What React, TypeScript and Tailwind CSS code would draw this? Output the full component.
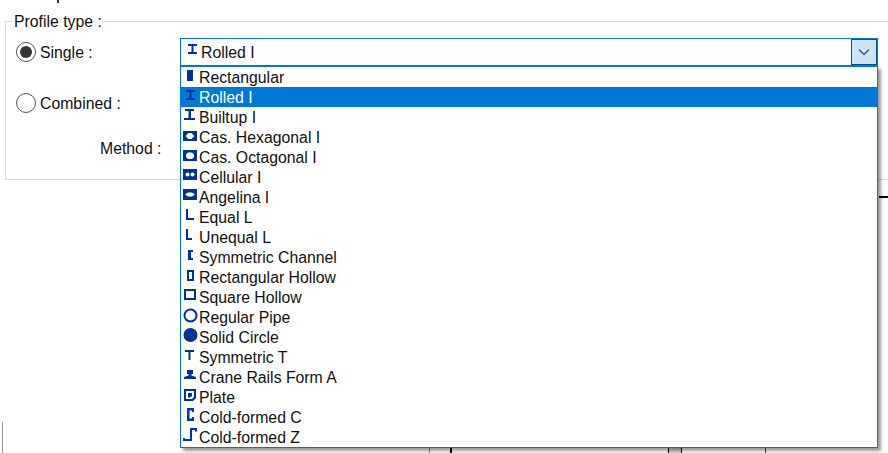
const items = [
  'Rectangular', 'Rolled I', 'Builtup I', 'Cas. Hexagonal I', 'Cas. Octagonal I', 'Cellular I', 'Angelina I',
  'Equal L', 'Unequal L', 'Symmetric Channel', 'Rectangular Hollow', 'Square Hollow', 'Regular Pipe',
  'Solid Circle', 'Symmetric T', 'Crane Rails Form A', 'Plate', 'Cold-formed C', 'Cold-formed Z',
];

// section glyphs, drawn on the 18x20 cell of a list row
function ProfileIcon({ name }: { name: string }) {
  const dark = '#003399';
  const blue = '#0033cc';
  let body = null;
  switch (name) {
    case 'Rectangular':
      body = <rect x="6" y="3" width="6" height="11" fill={dark} />;
      break;
    case 'Rolled I':
      body = <path d="M5 3h9v2h-3.500v6H14v2H5v-2h3.500V5H5z" fill={dark} />;
      break;
    case 'Builtup I':
      body = <path d="M4 2h9v2h-3v7h4v2H3v-2h4.500V4H4z" fill={dark} />;
      break;
    case 'Cas. Hexagonal I':
      body = <path fillRule="evenodd" d="M2 4h14v10H2zM4.500 9l3-3h3l3 3-3 3h-3z" fill={dark} />;
      break;
    case 'Cas. Octagonal I':
      body = <path fillRule="evenodd" d="M2 3h14v11H2zM7 5.500h4l2 2v2.500l-2 2H7l-2-2V7.500z" fill={dark} />;
      break;
    case 'Cellular I':
      body = (
        <>
          <path d="M2 2h14v11H2z" fill={dark} />
          <circle cx="6.500" cy="7.500" r="2" fill="#fff" />
          <circle cx="11.500" cy="7.500" r="2" fill="#fff" />
        </>
      );
      break;
    case 'Angelina I':
      body = <path fillRule="evenodd" d="M2 2h14v11H2zM4 7.500l3-2h4l3 2-3 2H7z" fill={dark} />;
      break;
    case 'Equal L':
      body = <path d="M5 2h2v9h6v2H5z" fill={dark} />;
      break;
    case 'Unequal L':
      body = <path d="M5 2h2v9h4v2H5z" fill={dark} />;
      break;
    case 'Symmetric Channel':
      body = <path d="M7 3h5v2H10v6h2v2H7z" fill={dark} />;
      break;
    case 'Rectangular Hollow':
      body = <path fillRule="evenodd" d="M6 3h7v11H6zM8 5v7h3V5z" fill={dark} />;
      break;
    case 'Square Hollow':
      body = <path fillRule="evenodd" d="M3 2h12v11H3zM5 4v7h8V4z" fill={dark} />;
      break;
    case 'Regular Pipe':
      body = <circle cx="9.500" cy="8.500" r="6" fill="none" stroke={dark} strokeWidth="2" />;
      break;
    case 'Solid Circle':
      body = <circle cx="9.500" cy="8" r="7" fill={dark} />;
      break;
    case 'Symmetric T':
      body = <path d="M4 3h9v2H9.500v8h-2V5H4z" fill={dark} />;
      break;
    case 'Crane Rails Form A':
      body = <path d="M6 3h6v4h-1.500v1.500L15 10v2H3v-2l4.500-1.500V7H6z" fill={dark} />;
      break;
    case 'Plate':
      body = <path fillRule="evenodd" d="M3 2h12v9l-3 3H3zM5 4v8h6l2-2V4zM7 6h4v3l-2 1.500H7z" fill={dark} />;
      break;
    case 'Cold-formed C':
      body = <path d="M6 1h7v4h-2V3.500H8.500v8H11V10h2v4H6z" fill={blue} />;
      break;
    case 'Cold-formed Z':
      body = <path d="M9 1h7v3.500h-2V3h-3v11H2v-3h2v1h5z" fill={blue} />;
      break;
  }
  return (
    <svg width="18" height="20" viewBox="0 0 18 20" className="shrink-0">
      {body}
    </svg>
  );
}

export default function App() {
  return (
    <div className="font-['Liberation_Sans',Arial,sans-serif] flex flex-col w-[888px] h-[453px] overflow-hidden bg-white text-[15.8px] text-[#111]">
      {/* descender of the clipped line above */}
      <div className="ml-[57px] w-[2px] h-[3px] bg-[#333]" />

      <fieldset className="ml-[5px] mt-[9px] w-[900px] h-[168px] shrink-0 border border-[#dcdcdc] pl-[10px] pt-[8px]">
        <legend className="ml-[-2px] leading-[18px]">
          <span className="inline-block translate-y-px">Profile type :</span>
        </legend>

        <div className="flex items-center h-[28px]">
          <label className="w-[164px] flex items-center gap-[4px]">
            <span className="w-[20px] h-[20px] rounded-full border border-[#555] flex items-center justify-center">
              <span className="w-[12px] h-[12px] rounded-full bg-[#333]" />
            </span>
            <span className="pt-[2px]">Single :</span>
          </label>

          <div className="relative w-[698px] h-[28px]">
            <div className="h-full border border-[#0078d7] bg-white flex">
              <div className="flex-1 flex items-center pl-[2px]">
                <span className="mt-[-3px]">
                  <ProfileIcon name="Rolled I" />
                </span>
                <span className="pt-[1px]">Rolled I</span>
              </div>
              <div className="w-[26px] border border-[#005499] bg-[#cce4f7] flex items-center justify-center">
                <svg width="12" height="8" viewBox="0 0 12 8">
                  <path d="M1 1.500l5 5 5-5" fill="none" stroke="#555" strokeWidth="1.300" />
                </svg>
              </div>
            </div>

            {/* open list */}
            <ul className="absolute left-0 top-full z-10 w-full border border-[#0078d7] bg-white shadow-[3px_3px_3px_rgba(0,0,0,0.4)]">
              {items.map((item) => (
                <li
                  key={item}
                  className={
                    item === 'Rolled I'
                      ? 'h-[20px] flex items-center bg-[#0078d7] text-white'
                      : 'h-[20px] flex items-center'
                  }
                >
                  <ProfileIcon name={item} />
                  <span className="pt-[2px]">{item}</span>
                </li>
              ))}
            </ul>
          </div>
        </div>

        <label className="flex items-center gap-[4px] h-[24px] mt-[25px]">
          <span className="w-[20px] h-[20px] rounded-full border border-[#555]" />
          <span className="pt-[2px]">Combined :</span>
        </label>

        <div className="pl-[84px] mt-[25px] leading-[18px]">Method :</div>
      </fieldset>

      {/* bits of the drawing behind the list */}
      <div className="ml-[879px] mt-[16px] w-[9px] h-[2px] shrink-0 bg-black" />
      <div className="mt-auto flex items-end h-[31px]">
        <div className="ml-[2px] w-[427px] h-full border-l border-[#9a9a9a]" />
        <div className="w-[21px] h-[5px] border-l border-[#888]" />
        <div className="w-[218px] h-[5px] border-l-2 border-black" />
        <div className="w-[13px] h-[5px] border-l border-black bg-[#d8d8d8]" />
        <div className="w-[84px] h-[5px] border-l border-black" />
        <div className="w-[20px] h-[5px] border-l border-[#a02020]" />
      </div>
    </div>
  );
}
